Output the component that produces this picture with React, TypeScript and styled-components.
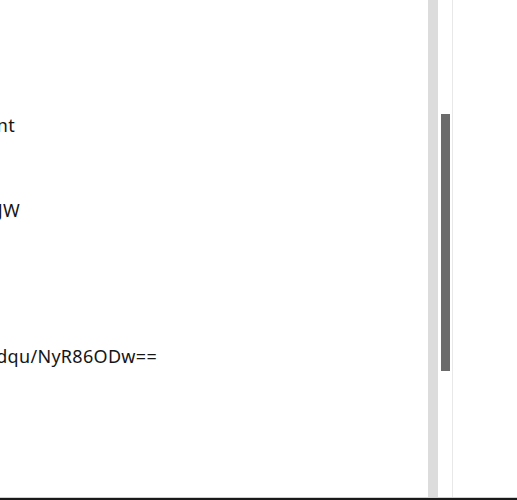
import React from 'react';
import styled, { createGlobalStyle } from 'styled-components';

const GlobalStyle = createGlobalStyle`
  html, body {
    margin: 0;
    padding: 0;
    background: #ffffff;
  }
  body {
    font-family: "Noto Sans", "Open Sans", sans-serif;
  }
`;

const Frame = styled.div`
  width: 517px;
  height: 500px;
  display: flex;
  flex-direction: column;
  overflow: hidden;
`;

const Body = styled.div`
  flex: 1;
  display: flex;
  min-height: 0;
`;

const ContentPanel = styled.div`
  width: 428px;
  flex: none;
  overflow: hidden;
  padding-top: 113px;
  display: flex;
  flex-direction: column;
  color: #161616;
  font-size: 18px;
  line-height: 24px;
  letter-spacing: 0.3px;
`;

// right end of each line is where the visible text stops; the rest overflows to the left
const Line = styled.div<{ $end: number; $gap: number }>`
  width: ${p => p.$end}px;
  margin-top: ${p => p.$gap}px;
  display: flex;
  justify-content: flex-end;
  white-space: nowrap;
`;

const GutterStrip = styled.div`
  width: 10px;
  flex: none;
  background: #dcdcdc;
`;

const ScrollTrack = styled.div`
  width: 14px;
  flex: none;
  display: flex;
  justify-content: center;
`;

const Thumb = styled.div`
  width: 9px;
  height: 257px;
  margin-top: 114px;
  background: #6b6b6b;
`;

const Divider = styled.div`
  width: 1px;
  flex: none;
  background: #e8e8e8;
`;

const SidePanel = styled.div`
  flex: 1;
  background: #ffffff;
`;

const BottomRule = styled.div`
  height: 1px;
  flex: none;
  background: #d0d0d0;
`;

const BottomBar = styled.div`
  height: 2px;
  flex: none;
  background: #1a1a1a;
`;

const lines = [
  { text: 'Content', end: 15, gap: 0 },
  { text: 'ETag: W/"0x8DB2F1A9C3E4B2A"-kJW', end: 20, gap: 61 },
  { text: 'Content-MD5: 8Zk3t2qGvXcPpHdqu/NyR86ODw==', end: 157, gap: 122 },
];

export default function App() {
  return (
    <>
      <GlobalStyle />
      <Frame>
        <Body>
          <ContentPanel>
            {lines.map(l => (
              <Line key={l.text} $end={l.end} $gap={l.gap}>
                <span>{l.text}</span>
              </Line>
            ))}
          </ContentPanel>
          <GutterStrip />
          <ScrollTrack>
            <Thumb />
          </ScrollTrack>
          <Divider />
          <SidePanel />
        </Body>
        <BottomRule />
        <BottomBar />
      </Frame>
    </>
  );
}
